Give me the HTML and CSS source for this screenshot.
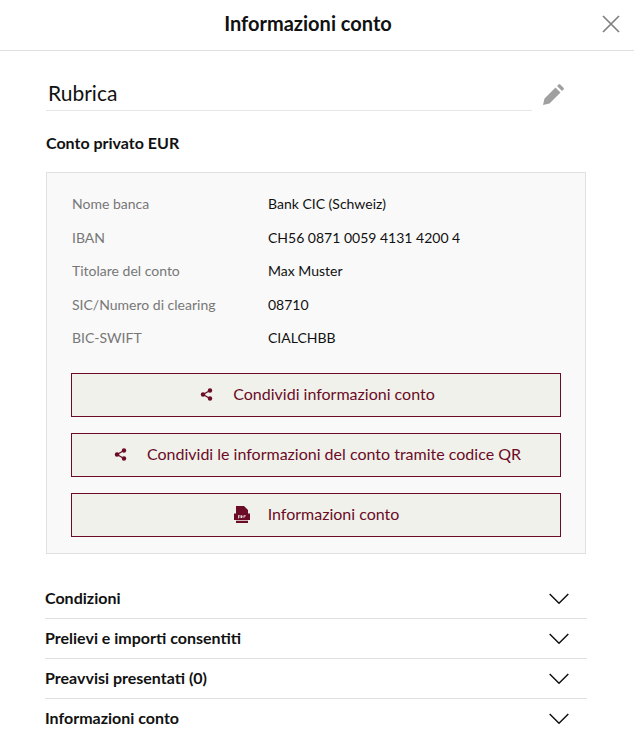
FILE: index.html
```html
<!DOCTYPE html>
<html lang="it">
<head>
<meta charset="utf-8">
<title>Informazioni conto</title>
<link rel="stylesheet" href="styles.css">
</head>
<body>
<header class="top">
  <h1 class="title">Informazioni conto</h1>
  <button class="close" aria-label="Chiudi">
    <svg width="18" height="18" viewBox="0 0 18 18"><path d="M1 1l16 16M17 1L1 17" fill="none" stroke="#808080" stroke-width="1.7"/></svg>
  </button>
</header>
<main class="content">
  <div class="name-row">
    <div class="name-field">Rubrica</div>
    <svg class="pencil" width="22" height="22" viewBox="0 0 22 22"><path d="M1 21l1.500-6.500L13.500 3.500l5 5L7.500 19.500zM15 2l1.500-1.500a1.200 1.200 0 0 1 1.700 0l3.300 3.300a1.200 1.200 0 0 1 0 1.700L20 7z" fill="#a0a0a0"/></svg>
  </div>
  <h2 class="section">Conto privato EUR</h2>
  <section class="panel">
    <dl class="info">
      <dt>Nome banca</dt><dd>Bank CIC (Schweiz)</dd>
      <dt>IBAN</dt><dd>CH56 0871 0059 4131 4200 4</dd>
      <dt>Titolare del conto</dt><dd>Max Muster</dd>
      <dt>SIC/Numero di clearing</dt><dd>08710</dd>
      <dt>BIC-SWIFT</dt><dd>CIALCHBB</dd>
    </dl>
    <div class="actions">
      <button class="btn btn-share">
        <svg width="13" height="13" viewBox="0 0 13 13"><path d="M10 2.500L3 6.500l7 4" fill="none" stroke="#6b0b26" stroke-width="1.300"/><circle cx="10" cy="2.500" r="2.200" fill="#6b0b26"/><circle cx="3" cy="6.500" r="2.200" fill="#6b0b26"/><circle cx="10" cy="10.500" r="2.200" fill="#6b0b26"/></svg>
        <span>Condividi informazioni conto</span>
      </button>
      <button class="btn btn-share">
        <svg width="13" height="13" viewBox="0 0 13 13"><path d="M10 2.500L3 6.500l7 4" fill="none" stroke="#6b0b26" stroke-width="1.300"/><circle cx="10" cy="2.500" r="2.200" fill="#6b0b26"/><circle cx="3" cy="6.500" r="2.200" fill="#6b0b26"/><circle cx="10" cy="10.500" r="2.200" fill="#6b0b26"/></svg>
        <span>Condividi le informazioni del conto tramite codice QR</span>
      </button>
      <button class="btn btn-pdf">
        <svg width="16" height="17" viewBox="0 0 16 17"><path d="M2 0h8l4 4v3.500H2zM0 7.500h16V14H0zM2 14.800h12V17H2z" fill="#6b0b26"/><path d="M4 9.300h1.800v1H4.800v.5h.9v.6h-.9v1H4zM6.500 9.300h1.300l.8.8v1.200l-.8.8H6.500zM9.500 9.300h2.200v.7h-1.400v.5h1.200v.6h-1.200v1h-.8z" fill="#e8d8dc"/></svg>
        <span>Informazioni conto</span>
      </button>
    </div>
  </section>
  <ul class="accordion">
    <li class="acc-row"><span>Condizioni</span><svg width="20" height="12" viewBox="0 0 20 12"><path d="M.7 1l9.300 9.300L19.300 1" fill="none" stroke="#111" stroke-width="1.500"/></svg></li>
    <li class="acc-row"><span>Prelievi e importi consentiti</span><svg width="20" height="12" viewBox="0 0 20 12"><path d="M.7 1l9.300 9.300L19.300 1" fill="none" stroke="#111" stroke-width="1.500"/></svg></li>
    <li class="acc-row"><span>Preavvisi presentati (0)</span><svg width="20" height="12" viewBox="0 0 20 12"><path d="M.7 1l9.300 9.300L19.300 1" fill="none" stroke="#111" stroke-width="1.500"/></svg></li>
    <li class="acc-row"><span>Informazioni conto</span><svg width="20" height="12" viewBox="0 0 20 12"><path d="M.7 1l9.300 9.300L19.300 1" fill="none" stroke="#111" stroke-width="1.500"/></svg></li>
  </ul>
</main>
</body>
</html>
```
FILE: styles.css
```css
* { box-sizing: border-box; }
html, body { margin: 0; padding: 0; background: #fff; }
body { font-family: Lato, "Liberation Sans", sans-serif; color: #111; height: 752px; overflow: hidden; }
.top { height: 51px; border-bottom: 1px solid #e0e0e0; display: flex; align-items: flex-start; justify-content: center; position: relative; }
.title { margin: 0; font-size: 20px; font-weight: 700; line-height: 46px; color: #111; padding-right: 18px; }
.close { position: absolute; left: 602px; top: 15px; width: 18px; height: 18px; padding: 0; border: 0; background: none; display: block; }
.close svg { display: block; }
.content { padding: 0 47px 0 46px; }
.name-row { display: flex; align-items: flex-start; margin-top: 27px; }
.name-field { width: 486px; height: 33px; border-bottom: 1px solid #e6e6e6; font-size: 21px; line-height: 30px; padding-left: 2px; color: #111; }
.pencil { margin: 6px 0 0 10px; flex: none; }
.section { margin: 22px 0 0; font-size: 16px; font-weight: 700; line-height: 20px; color: #111; }
.panel { width: 540px; margin-top: 19px; height: 382px; border: 1px solid #e0e0e0; background: #f9f9f9; padding: 14px 24px 0; }
.info { margin: 0; display: grid; grid-template-columns: 197px 1fr; grid-auto-rows: 33.5px; font-size: 14px; line-height: 33px; }
.info dt { color: #777; padding-left: 1px; }
.info dd { margin: 0; color: #111; }
.actions { display: flex; flex-direction: column; gap: 16px; margin-top: 18px; }
.btn { width: 490px; height: 44px; border: 1px solid #6b0b26; background: #f1f1ec; color: #6b0b26; font: 400 16px Lato, "Liberation Sans", sans-serif; display: flex; align-items: center; justify-content: center; padding: 0; }
.btn span { margin-bottom: 2px; }
.btn svg { flex: none; display: block; }
.btn-share { gap: 20px; padding-left: 3px; }
.btn-pdf { gap: 18px; padding-left: 1px; }
.accordion { list-style: none; margin: 25px 0 0; padding: 0; width: 541px; }
.acc-row { height: 40px; display: flex; align-items: center; justify-content: space-between; border-bottom: 1px solid #e0e0e0; font-size: 16px; font-weight: 700; padding: 0 18px 0 0; margin-left: -1px; }
.acc-row span { margin-bottom: 2px; }
.acc-row:last-child { border-bottom-color: transparent; }
```
